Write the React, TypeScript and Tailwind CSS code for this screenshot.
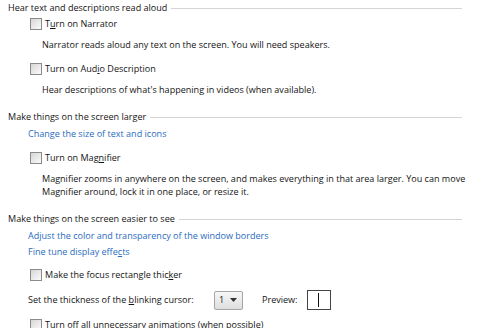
import { ReactNode } from "react";

function Checkbox() {
  return (
    <span className="inline-block w-[12px] h-[12px] border border-[#8a8a8a] bg-gradient-to-br from-[#d6d6d6] to-[#fbfbfb] shrink-0" />
  );
}

function Heading({ children, className = "" }: { children: ReactNode; className?: string }) {
  return (
    <div className={`flex items-center h-4 pl-2 pr-[18px] ${className}`}>
      <span className="whitespace-nowrap">{children}</span>
      <span className="flex-1 h-px bg-[#d5d5d5] ml-1 mt-px" />
    </div>
  );
}

function CheckRow({ children, className = "" }: { children: ReactNode; className?: string }) {
  return (
    <div className={`flex items-center gap-[3px] pl-[30px] h-4 ${className}`}>
      <Checkbox />
      <span className="whitespace-nowrap">{children}</span>
    </div>
  );
}

function Desc({ children, className = "" }: { children: ReactNode; className?: string }) {
  return <p className={`pl-[42px] pr-2 leading-[13px] whitespace-nowrap ${className}`}>{children}</p>;
}

function Link({ children, className = "" }: { children: ReactNode; className?: string }) {
  return <div className={`pl-7 h-4 leading-4 text-[#2a6cc0] ${className}`}>{children}</div>;
}

export default function App() {
  return (
    <div
      className="w-[480px] h-[328px] overflow-hidden bg-white text-[#141414] text-[9.05px] leading-4"
      style={{ fontFamily: '"Open Sans", sans-serif' }}
    >
      <Heading>Hear text and descriptions read aloud</Heading>
      <CheckRow>
        T<u>u</u>rn on Narrator
      </CheckRow>
      <Desc className="mt-[6px]">
        Narrator reads aloud any text on the screen. You will need speakers.
      </Desc>
      <CheckRow className="mt-[10px]">
        Turn on Aud<u>i</u>o Description
      </CheckRow>
      <Desc className="mt-[6px]">
        Hear descriptions of what's happening in videos (when available).
      </Desc>

      <Heading className="mt-[13px]">Make things on the screen larger</Heading>
      <Link className="mt-px">Change the size of text and icons</Link>
      <CheckRow className="mt-2">
        Turn on Mag<u>n</u>ifier
      </CheckRow>
      <Desc className="mt-[6px]">
        Magnifier zooms in anywhere on the screen, and makes everything in that area larger. You can move
        <br />
        Magnifier around, lock it in one place, or resize it.
      </Desc>

      <Heading className="mt-[13px]">Make things on the screen easier to see</Heading>
      <Link className="mt-px">Adjust the color and transparency of the window borders</Link>
      <Link>
        Fine tune display effe<u>c</u>ts
      </Link>
      <CheckRow className="mt-[7px]">
        Make the focus rectangle thic<u>k</u>er
      </CheckRow>

      <div className="flex items-center pl-7 mt-[7px] h-5">
        <span className="w-[186px] whitespace-nowrap">
          Set the thickness of the <u>b</u>linking cursor:
        </span>
        <div className="flex items-center justify-between w-[29px] h-[19px] border border-[#a5a5a5] rounded-[2px] bg-gradient-to-b from-[#f7f7f7] to-[#dedede] pl-[4px] pr-[5px]">
          <span>1</span>
          <svg width="7" height="4" viewBox="0 0 7 4">
            <path d="M0 0h7L3.5 4z" fill="#333" />
          </svg>
        </div>
        <span className="ml-[19px]">Preview:</span>
        <div className="ml-[9px] w-[24px] h-[20px] border border-[#444] flex items-center justify-center">
          <span className="w-px h-[14px] bg-[#111]" />
        </div>
      </div>

      <CheckRow className="mt-[7px]">
        Turn off all unnecessary animations (when possible)
      </CheckRow>
    </div>
  );
}
